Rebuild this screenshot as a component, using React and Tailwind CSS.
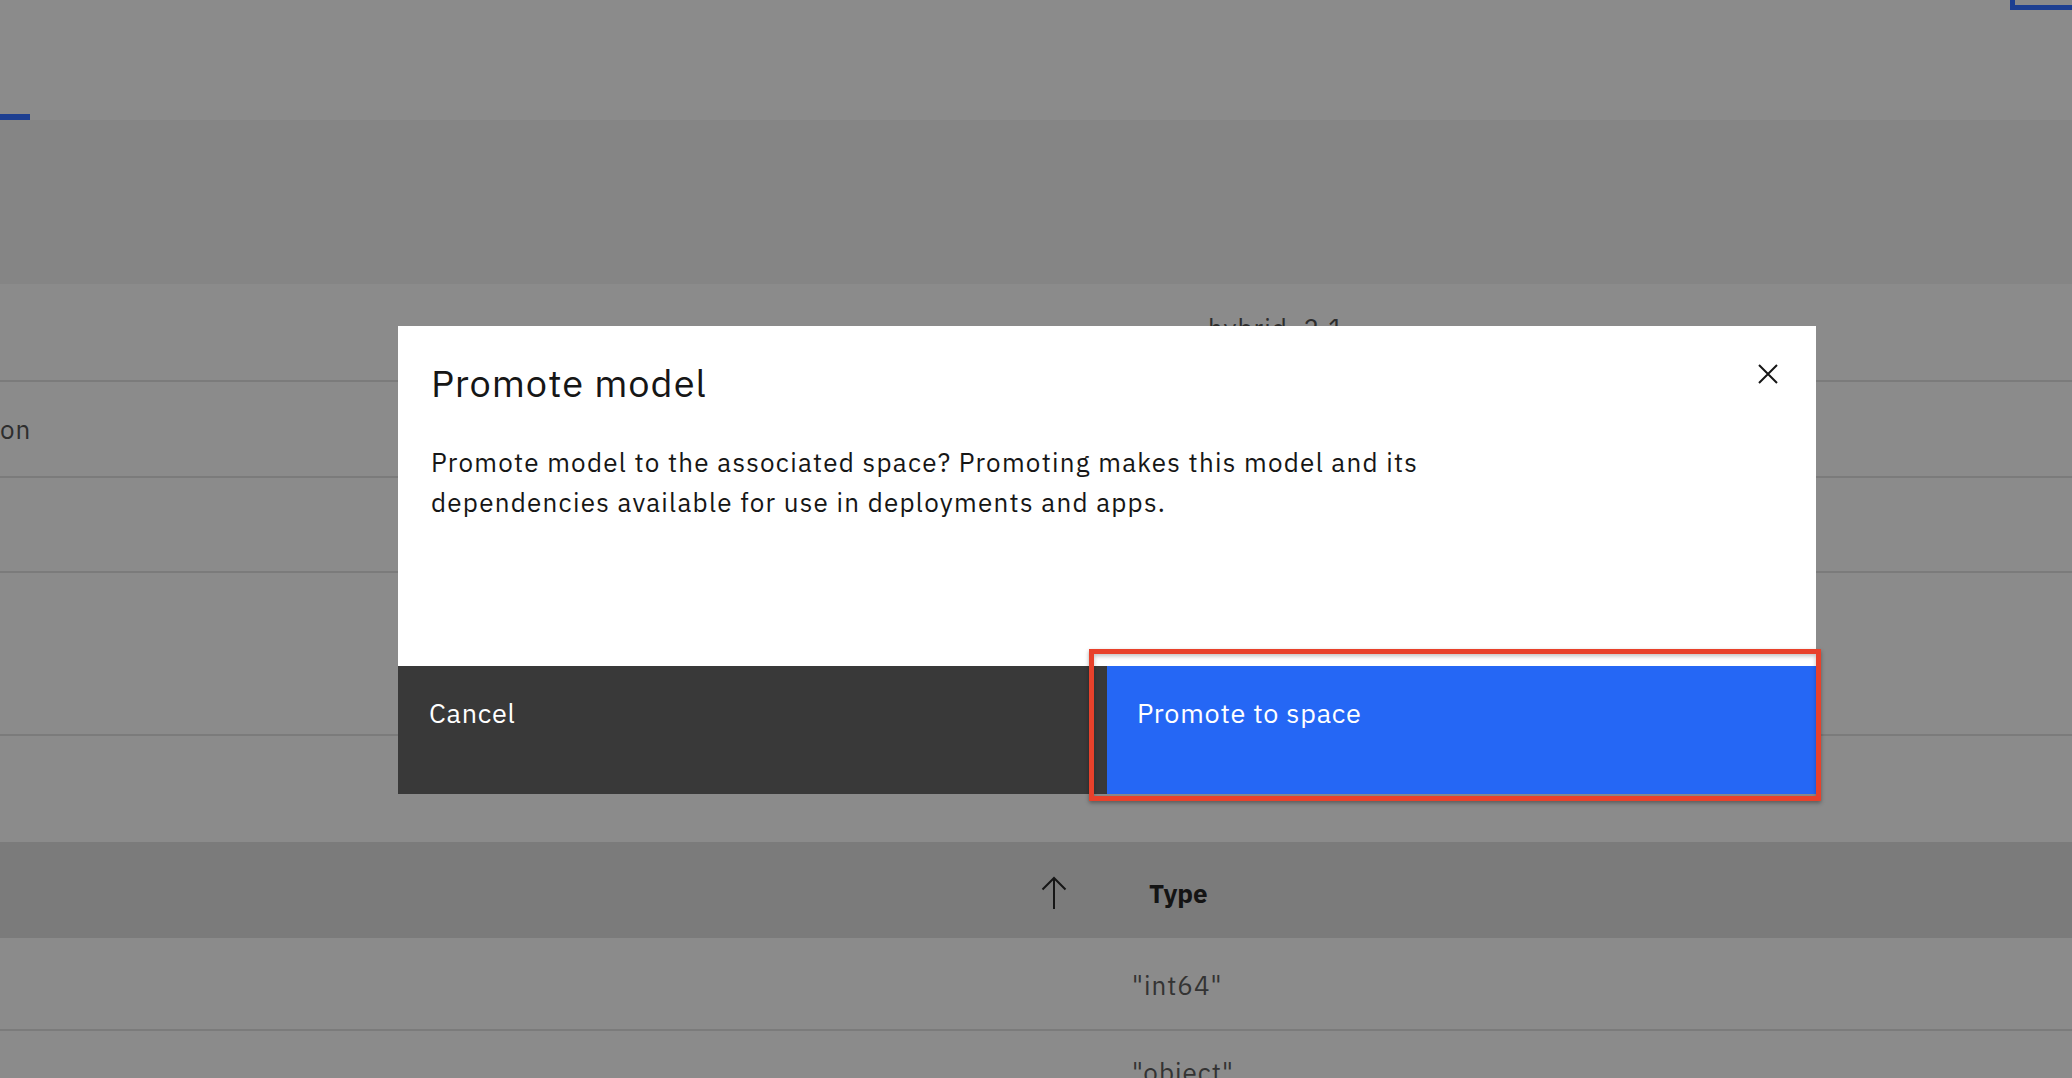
const ROWS = [
  { h: 'h-[98px]', text: null, right: 'hybrid_2.1' },
  { h: 'h-[96px]', text: 'on', right: null },
  { h: 'h-[95px]', text: null, right: null },
  { h: 'h-[163px]', text: null, right: null },
]

function SortArrow() {
  return (
    <svg width="26" height="34" viewBox="0 0 26 34" fill="none" stroke="#161616" strokeWidth="2">
      <path d="M13 33V2" />
      <path d="M1.5 13.5L13 2l11.5 11.5" />
    </svg>
  )
}

export default function App() {
  return (
    <div className="relative w-[2072px] h-[1078px] overflow-hidden bg-[#8b8b8b] font-['IBM_Plex_Sans','Noto_Sans',sans-serif] text-[#161616]">

      {/* page behind the overlay */}
      <header className="h-[120px] flex flex-col justify-between">
        <div className="flex justify-end">
          <div className="w-[62px] h-[10px] border-l-[5px] border-b-[5px] border-[#1d3f91]" />
        </div>
        <div className="w-[30px] h-[6px] bg-[#1d3f91]" />
      </header>
      <div className="h-[164px] bg-[#858585]" />

      {ROWS.map((r, i) => (
        <div key={i} className={`${r.h} border-b-2 border-[#7b7b7b] flex items-center text-[26px] tracking-[1px] text-[#2e2e2e]`}>
          <div className="w-[1208px]">{r.text}</div>
          {r.right && <div className="-mt-[8px]">{r.right}</div>}
        </div>
      ))}
      <div className="h-[106px]" />

      {/* table header */}
      <div className="h-[96px] bg-[#7b7b7b] flex items-center pt-[6px]">
        <div className="w-[1041px]" />
        <SortArrow />
        <div className="ml-[82px] text-[26px] font-bold text-[#141414]">Type</div>
      </div>
      <div className="h-[93px] border-b-2 border-[#7b7b7b] flex items-center text-[26px] tracking-[1px] text-[#333333]">
        <div className="ml-[1132px] mt-[4px]">"int64"</div>
      </div>
      <div className="h-[47px] flex items-start text-[26px] tracking-[1px] text-[#333333]">
        <div className="ml-[1132px] mt-[26px] leading-[30px]">"object"</div>
      </div>

      {/* modal */}
      <div className="absolute left-[398px] top-[326px] w-[1418px] bg-white flex flex-col">
        <button className="absolute top-[38px] right-[38px] w-[20px] h-[20px] text-[#161616]">
          <svg width="20" height="20" viewBox="0 0 20 20" stroke="currentColor" strokeWidth="2">
            <path d="M1 1l18 18M19 1L1 19" />
          </svg>
        </button>
        <div className="pt-[33px] px-[33px] h-[340px]">
          <h2 className="text-[38px] leading-[48px] font-normal tracking-[1px]">Promote model</h2>
          <p className="mt-[35px] text-[26px] leading-[40px] tracking-[1.25px]">
            Promote model to the associated space? Promoting makes this model and its<br />
            dependencies available for use in deployments and apps.
          </p>
        </div>
        <div className="grid grid-cols-2 h-[128px]">
          <button className="bg-[#393939] text-white text-left text-[27px] leading-[36px] tracking-[0.75px] pt-[29px] pl-[31px] flex items-start">
            Cancel
          </button>
          <button className="bg-[#2567f5] text-white text-left text-[27px] leading-[36px] tracking-[0.75px] pt-[29px] pl-[30px] flex items-start">
            Promote to space
          </button>
        </div>
      </div>

      {/* highlight annotation */}
      <div className="absolute left-[1089px] top-[649px] w-[732px] h-[152px] border-[5px] border-[#e8412b] shadow-[0_2px_4px_rgba(0,0,0,0.35),inset_0_2px_4px_rgba(0,0,0,0.25)]" />
    </div>
  )
}
